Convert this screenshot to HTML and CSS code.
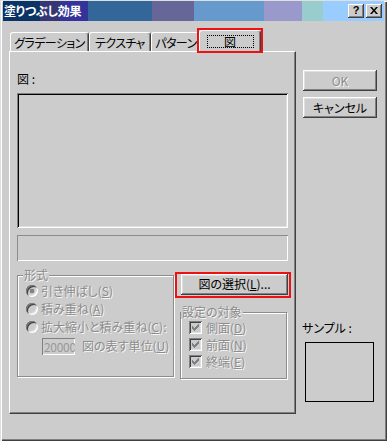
FILE: index.html
```html
<!DOCTYPE html>
<html lang="ja">
<head>
<meta charset="utf-8">
<title>塗りつぶし効果</title>
<link rel="stylesheet" href="styles.css">
</head>
<body>
<div class="window">
  <div class="titlebar">
    <span class="title">塗りつぶし効果</span>
    <span class="tbtn help">?</span>
    <span class="tbtn close"><svg width="8" height="7" viewBox="0 0 8 7"><path d="M0 0h2l2 2.4L6 0h2L5 3.5 8 7H6L4 4.6 2 7H0l3-3.5z" fill="#000"/></svg></span>
  </div>
  <div class="main">
    <div class="left">
      <div class="tabs">
        <div class="tab t1">グラデーション</div>
        <div class="tab t2">テクスチャ</div>
        <div class="tab t3">パターン</div>
        <div class="tab t4 active marked"><span class="focus">図</span></div>
      </div>
      <div class="panel">
        <div class="pic-label">図 :</div>
        <div class="picture"></div>
        <div class="field"></div>
        <div class="lower">
          <div class="group format">
            <div class="group-title dis">形式</div>
            <div class="opt"><span class="radio on"></span><span class="dis">引き伸ばし(<u>S</u>)</span></div>
            <div class="opt"><span class="radio"></span><span class="dis">積み重ね(<u>A</u>)</span></div>
            <div class="opt"><span class="radio"></span><span class="dis">拡大縮小と積み重ね(<u>C</u>):</span></div>
            <div class="unit-row"><span class="edit dis">20000</span><span class="dis">図の表す単位(<u>U</u>)</span></div>
          </div>
          <div class="side">
            <div class="btn select marked">図の選択(<u>L</u>)...</div>
            <div class="group target">
              <div class="group-title dis">設定の対象</div>
              <div class="opt chk"><span class="check"><svg width="7" height="7" viewBox="0 0 7 7"><path d="M0 2h1v1h1v1h1V3h1V2h1V1h1V0h1v3H6v1H5v1H4v1H3v1H2V6H1V5H0z" fill="#808080"/></svg></span><span class="dis">側面(<u>D</u>)</span></div>
              <div class="opt chk"><span class="check"><svg width="7" height="7" viewBox="0 0 7 7"><path d="M0 2h1v1h1v1h1V3h1V2h1V1h1V0h1v3H6v1H5v1H4v1H3v1H2V6H1V5H0z" fill="#808080"/></svg></span><span class="dis">前面(<u>N</u>)</span></div>
              <div class="opt chk"><span class="check"><svg width="7" height="7" viewBox="0 0 7 7"><path d="M0 2h1v1h1v1h1V3h1V2h1V1h1V0h1v3H6v1H5v1H4v1H3v1H2V6H1V5H0z" fill="#808080"/></svg></span><span class="dis">終端(<u>E</u>)</span></div>
            </div>
          </div>
        </div>
      </div>
    </div>
    <div class="right">
      <div class="btn ok"><span class="dis">OK</span></div>
      <div class="btn cancel">キャンセル</div>
      <div class="sample-label">サンプル :</div>
      <div class="sample"></div>
    </div>
  </div>
</div>
</body>
</html>
```

FILE: styles.css
```css
* { box-sizing: border-box; }
html, body { margin: 0; padding: 0; }
body {
  background: #cccccc;
  font-family: "Noto Sans CJK JP", "Noto Sans", sans-serif;
  font-size: 12px;
  font-feature-settings: "palt";
  color: #000;
  line-height: 1;
}
u { text-decoration: underline; text-underline-offset: 1px; }

.window {
  width: 387px;
  height: 441px;
  padding: 1px 3px 3px 3px;
  background: #cccccc;
  box-shadow: inset 1px 1px #dfdfdf, inset 2px 2px #ffffff, inset -1px -1px #404040, inset -2px -2px #808080;
  display: flex;
  flex-direction: column;
}

.titlebar {
  height: 20px;
  flex: none;
  display: flex;
  align-items: center;
  padding: 0 2px 0 1px;
  background: linear-gradient(to right,
    #0a3366 0 37px, #363674 37px 57px, #333399 57px 85px,
    #336699 85px 149px, #666699 149px 191px, #6699cc 191px 261px,
    #9999cc 261px 299px, #99cccc 299px 320px, #99ccff 320px);
}
.title { color: #fff; font-weight: bold; font-size: 12px; margin-right: auto; letter-spacing: -0.3px; }
.tbtn {
  width: 16px; height: 14px;
  background: #cccccc;
  box-shadow: inset -1px -1px #404040, inset 1px 1px #ffffff, inset -2px -2px #808080;
  display: flex; align-items: center; justify-content: center;
}
.tbtn + .tbtn { margin-left: 2px; }
.help { font-family: "Liberation Sans", sans-serif; font-weight: bold; font-size: 11px; padding-bottom: 1px; }
.close svg { display: block; margin-bottom: 1px; }

.main { flex: 1; display: flex; padding: 9px 0 0 6px; gap: 7px; }
.left { width: 287px; display: flex; flex-direction: column; }

.tabs { display: flex; align-items: flex-end; height: 21px; padding-left: 1px; position: relative; z-index: 1; }
.tab {
  height: 19px;
  border: 1px solid #ffffff;
  border-bottom: none;
  border-right-color: #404040;
  border-radius: 3px 3px 0 0;
  box-shadow: inset -1px 0 #808080;
  background: #cccccc;
  display: flex; align-items: center; justify-content: center;
  padding-top: 1px;
  letter-spacing: -0.6px;
}
.t1 { width: 79px; }
.t2 { width: 62px; }
.t3 { width: 50px; }
.t4 { width: 58px; }
.tab.active { width: 62px; height: 22px; margin: 0 -2px -1px -2px; padding-top: 0; position: relative; letter-spacing: 0; }
.focus {
  width: 47px; height: 13px;
  border: 1px dotted #000;
  display: flex; align-items: center; justify-content: center;
}
.marked { position: relative; }
.tab.marked::after {
  content: ""; position: absolute;
  left: -3px; right: -3px; top: -3px; bottom: -1px;
  border: 2px solid #ee1111;
}

.panel {
  height: 363px;
  border: 1px solid #ffffff;
  border-right-color: #404040;
  border-bottom-color: #404040;
  box-shadow: inset -1px -1px #808080;
  padding: 0 7px;
}
.pic-label { margin-top: 19px; height: 16px; line-height: 16px; }
.picture {
  margin-top: 6px;
  height: 135px;
  box-shadow: inset 1px 1px #808080, inset -1px -1px #ffffff, inset 2px 2px #000000, inset -2px -2px #dfdfdf;
}
.field {
  margin-top: 7px;
  height: 26px;
  box-shadow: inset 1px 1px #8c8c8c, inset -1px -1px #ffffff;
}

.dis { color: #8c8c8c; text-shadow: 1px 1px 0 rgba(255,255,255,0.85); }

.lower { display: flex; justify-content: space-between; margin-top: 13px; }
.group {
  border: 1px solid #8c8c8c;
  box-shadow: inset 1px 1px #ffffff, 1px 1px #ffffff;
}
.group-title {
  width: fit-content;
  margin-top: -8px;
  height: 14px; line-height: 14px;
  padding: 0 1px;
  background: #cccccc;
}
.format { width: 157px; height: 102px; margin-top: 1px; padding: 0 0 0 8px; }
.format .group-title { margin-left: -3px; }
.format .opt:first-of-type { margin-top: 13px; }
.opt { display: flex; align-items: center; height: 18px; gap: 3px; white-space: nowrap; }
.radio {
  width: 12px; height: 12px; flex: none;
  border-radius: 50%;
  background: #cccccc;
  box-shadow: inset 1px 1px #808080, inset -1px -1px #ffffff, inset 2px 2px #404040, inset -2px -2px #dfdfdf;
}
.radio.on { background: radial-gradient(circle at center, #808080 0 2px, #cccccc 2.6px); }
.unit-row { display: flex; align-items: center; height: 18px; margin-top: 1px; padding-left: 16px; gap: 7px; white-space: nowrap; }
.edit {
  width: 33px; height: 17px;
  overflow: hidden;
  padding: 2px 0 0 2px;
  line-height: 13px;
  letter-spacing: -0.3px;
  box-shadow: inset 1px 1px #808080, inset -1px -1px #ffffff;
  text-shadow: none;
  color: #999;
}

.side { width: 108px; display: flex; flex-direction: column; }
.btn {
  background: #cccccc;
  box-shadow: inset -1px -1px #404040, inset 1px 1px #ffffff, inset -2px -2px #808080, inset 2px 2px #dfdfdf;
  display: flex; align-items: center; justify-content: center;
  height: 21px;
  white-space: nowrap;
}
.select { width: 107px; margin-left: 1px; padding-bottom: 1px; }
.btn.marked::after {
  content: ""; position: absolute;
  left: -6px; right: -3px; top: -2px; bottom: -3px;
  border: 2px solid #ee1111;
}
.target { width: 107px; height: 67px; margin-top: 17px; padding: 0 0 0 8px; }
.target .group-title { margin-left: -8px; }
.target .opt:first-of-type { margin-top: 5px; }
.opt.chk { height: 17px; gap: 4px; }
.check {
  width: 13px; height: 13px; flex: none;
  background: #cccccc;
  box-shadow: inset 1px 1px #808080, inset -1px -1px #ffffff, inset 2px 2px #404040, inset -2px -2px #dfdfdf;
  display: flex; align-items: center; justify-content: center;
}
.check svg { display: block; }

.right { width: 74px; display: flex; flex-direction: column; }
.ok { margin-top: 40px; }
.cancel { margin-top: 6px; }
.sample-label { margin-top: 203px; height: 14px; line-height: 14px; margin-left: -1px; }
.sample { margin: 7px 0 0 2px; width: 69px; height: 60px; border: 1px solid #000; }
```
